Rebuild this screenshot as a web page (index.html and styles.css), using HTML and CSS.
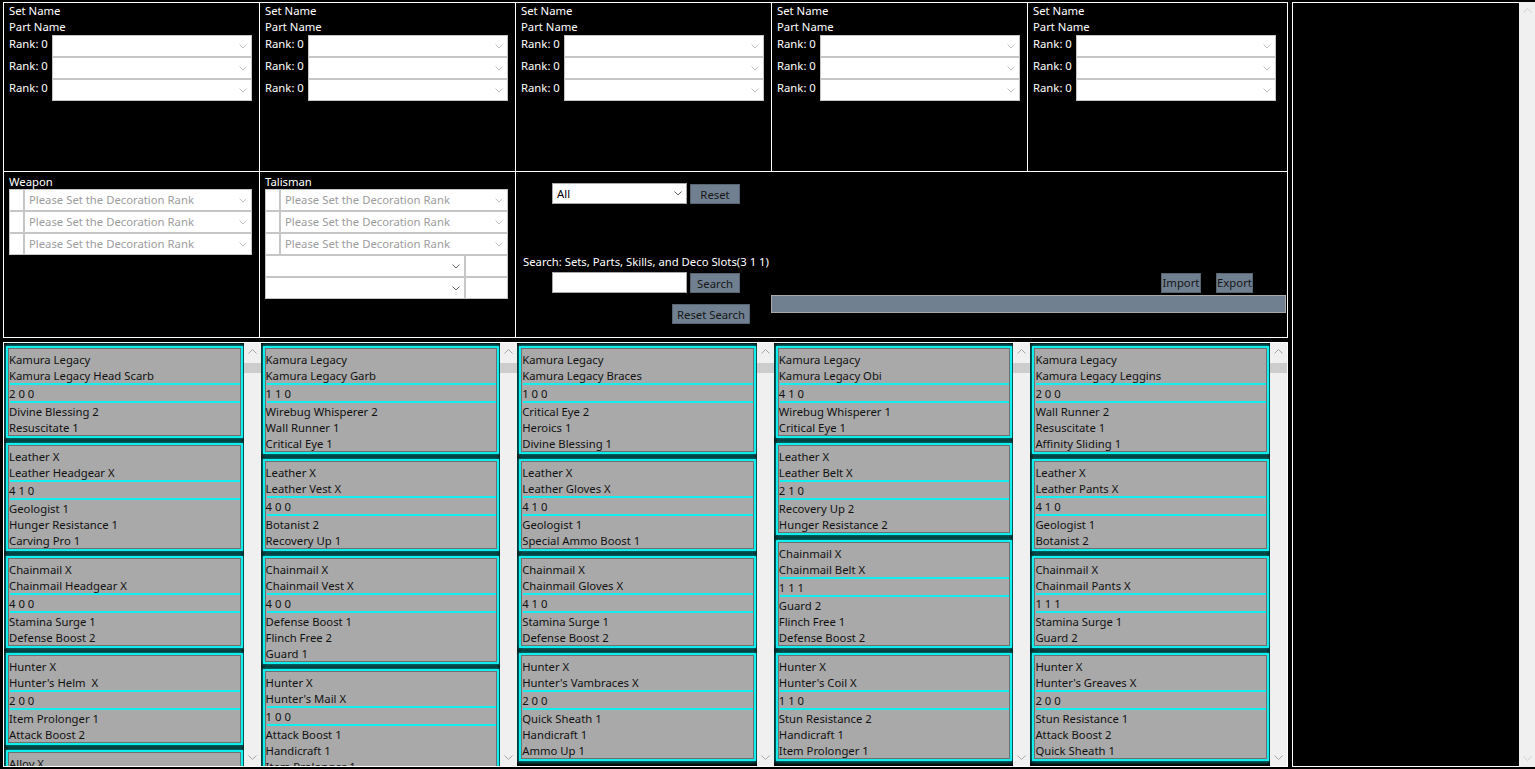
FILE: index.html
```html
<!DOCTYPE html>
<html>
<head>
<meta charset="utf-8">
<link rel="stylesheet" href="styles.css">
</head>
<body>
<div class="app">
  <div class="left">
    <div class="top-panel">
      <div class="cell set">
        <div class="t">Set Name</div><div class="t">Part Name</div>
        <div class="rank-row"><span class="rank">Rank: 0</span><div class="combo w200"><svg class="chev dis" width="8" height="5" viewBox="0 0 8 5"><path d="M0.5 0.5L4 4L7.5 0.5"/></svg></div></div>
        <div class="rank-row"><span class="rank">Rank: 0</span><div class="combo w200"><svg class="chev dis" width="8" height="5" viewBox="0 0 8 5"><path d="M0.5 0.5L4 4L7.5 0.5"/></svg></div></div>
        <div class="rank-row"><span class="rank">Rank: 0</span><div class="combo w200"><svg class="chev dis" width="8" height="5" viewBox="0 0 8 5"><path d="M0.5 0.5L4 4L7.5 0.5"/></svg></div></div>
      </div>
      <div class="cell set">
        <div class="t">Set Name</div><div class="t">Part Name</div>
        <div class="rank-row"><span class="rank">Rank: 0</span><div class="combo w200"><svg class="chev dis" width="8" height="5" viewBox="0 0 8 5"><path d="M0.5 0.5L4 4L7.5 0.5"/></svg></div></div>
        <div class="rank-row"><span class="rank">Rank: 0</span><div class="combo w200"><svg class="chev dis" width="8" height="5" viewBox="0 0 8 5"><path d="M0.5 0.5L4 4L7.5 0.5"/></svg></div></div>
        <div class="rank-row"><span class="rank">Rank: 0</span><div class="combo w200"><svg class="chev dis" width="8" height="5" viewBox="0 0 8 5"><path d="M0.5 0.5L4 4L7.5 0.5"/></svg></div></div>
      </div>
      <div class="cell set">
        <div class="t">Set Name</div><div class="t">Part Name</div>
        <div class="rank-row"><span class="rank">Rank: 0</span><div class="combo w200"><svg class="chev dis" width="8" height="5" viewBox="0 0 8 5"><path d="M0.5 0.5L4 4L7.5 0.5"/></svg></div></div>
        <div class="rank-row"><span class="rank">Rank: 0</span><div class="combo w200"><svg class="chev dis" width="8" height="5" viewBox="0 0 8 5"><path d="M0.5 0.5L4 4L7.5 0.5"/></svg></div></div>
        <div class="rank-row"><span class="rank">Rank: 0</span><div class="combo w200"><svg class="chev dis" width="8" height="5" viewBox="0 0 8 5"><path d="M0.5 0.5L4 4L7.5 0.5"/></svg></div></div>
      </div>
      <div class="cell set">
        <div class="t">Set Name</div><div class="t">Part Name</div>
        <div class="rank-row"><span class="rank">Rank: 0</span><div class="combo w200"><svg class="chev dis" width="8" height="5" viewBox="0 0 8 5"><path d="M0.5 0.5L4 4L7.5 0.5"/></svg></div></div>
        <div class="rank-row"><span class="rank">Rank: 0</span><div class="combo w200"><svg class="chev dis" width="8" height="5" viewBox="0 0 8 5"><path d="M0.5 0.5L4 4L7.5 0.5"/></svg></div></div>
        <div class="rank-row"><span class="rank">Rank: 0</span><div class="combo w200"><svg class="chev dis" width="8" height="5" viewBox="0 0 8 5"><path d="M0.5 0.5L4 4L7.5 0.5"/></svg></div></div>
      </div>
      <div class="cell set last">
        <div class="t">Set Name</div><div class="t">Part Name</div>
        <div class="rank-row"><span class="rank">Rank: 0</span><div class="combo w200"><svg class="chev dis" width="8" height="5" viewBox="0 0 8 5"><path d="M0.5 0.5L4 4L7.5 0.5"/></svg></div></div>
        <div class="rank-row"><span class="rank">Rank: 0</span><div class="combo w200"><svg class="chev dis" width="8" height="5" viewBox="0 0 8 5"><path d="M0.5 0.5L4 4L7.5 0.5"/></svg></div></div>
        <div class="rank-row"><span class="rank">Rank: 0</span><div class="combo w200"><svg class="chev dis" width="8" height="5" viewBox="0 0 8 5"><path d="M0.5 0.5L4 4L7.5 0.5"/></svg></div></div>
      </div>

      <div class="cell deco">
        <div class="t lbl">Weapon</div>
        <div class="deco-row"><div class="slot"></div><div class="combo w228 ph"><span>Please Set the Decoration Rank</span><svg class="chev dis" width="8" height="5" viewBox="0 0 8 5"><path d="M0.5 0.5L4 4L7.5 0.5"/></svg></div></div>
        <div class="deco-row"><div class="slot"></div><div class="combo w228 ph"><span>Please Set the Decoration Rank</span><svg class="chev dis" width="8" height="5" viewBox="0 0 8 5"><path d="M0.5 0.5L4 4L7.5 0.5"/></svg></div></div>
        <div class="deco-row"><div class="slot"></div><div class="combo w228 ph"><span>Please Set the Decoration Rank</span><svg class="chev dis" width="8" height="5" viewBox="0 0 8 5"><path d="M0.5 0.5L4 4L7.5 0.5"/></svg></div></div>
      </div>
      <div class="cell deco">
        <div class="t lbl">Talisman</div>
        <div class="deco-row"><div class="slot"></div><div class="combo w228 ph"><span>Please Set the Decoration Rank</span><svg class="chev dis" width="8" height="5" viewBox="0 0 8 5"><path d="M0.5 0.5L4 4L7.5 0.5"/></svg></div></div>
        <div class="deco-row"><div class="slot"></div><div class="combo w228 ph"><span>Please Set the Decoration Rank</span><svg class="chev dis" width="8" height="5" viewBox="0 0 8 5"><path d="M0.5 0.5L4 4L7.5 0.5"/></svg></div></div>
        <div class="deco-row"><div class="slot"></div><div class="combo w228 ph"><span>Please Set the Decoration Rank</span><svg class="chev dis" width="8" height="5" viewBox="0 0 8 5"><path d="M0.5 0.5L4 4L7.5 0.5"/></svg></div></div>
        <div class="deco-row"><div class="combo w200"><svg class="chev" width="8" height="5" viewBox="0 0 8 5"><path d="M0.5 0.5L4 4L7.5 0.5"/></svg></div><div class="tbox w43"></div></div>
        <div class="deco-row"><div class="combo w200"><svg class="chev" width="8" height="5" viewBox="0 0 8 5"><path d="M0.5 0.5L4 4L7.5 0.5"/></svg></div><div class="tbox w43"></div></div>
      </div>
      <div class="cell mid">
        <div class="mid-left">
          <div class="filter-row">
            <div class="combo w135 all"><span>All</span><svg class="chev" width="8" height="5" viewBox="0 0 8 5"><path d="M0.5 0.5L4 4L7.5 0.5"/></svg></div>
            <div class="btn b-reset">Reset</div>
          </div>
          <div class="search-label">Search: Sets, Parts, Skills, and Deco Slots(3 1 1)</div>
          <div class="search-row">
            <div class="tbox w135 h21"></div>
            <div class="btn b-search">Search</div>
          </div>
          <div class="btn b-reset-search">Reset Search</div>
        </div>
        <div class="mid-right">
          <div class="io-row">
            <div class="btn b-import">Import</div>
            <div class="btn b-export">Export</div>
          </div>
          <div class="bar"></div>
        </div>
      </div>
    </div>

    <div class="lists">
      <div class="list">
        <div class="cards">
          <div class="card"><div class="ci"><div class="ln">Kamura Legacy</div><div class="ln">Kamura Legacy Head Scarb</div><div class="sep"></div><div class="ln">2 0 0</div><div class="sep"></div><div class="ln">Divine Blessing 2</div><div class="ln">Resuscitate 1</div></div></div>
          <div class="card"><div class="ci"><div class="ln">Leather X</div><div class="ln">Leather Headgear X</div><div class="sep"></div><div class="ln">4 1 0</div><div class="sep"></div><div class="ln">Geologist 1</div><div class="ln">Hunger Resistance 1</div><div class="ln">Carving Pro 1</div></div></div>
          <div class="card"><div class="ci"><div class="ln">Chainmail X</div><div class="ln">Chainmail Headgear X</div><div class="sep"></div><div class="ln">4 0 0</div><div class="sep"></div><div class="ln">Stamina Surge 1</div><div class="ln">Defense Boost 2</div></div></div>
          <div class="card"><div class="ci"><div class="ln">Hunter X</div><div class="ln">Hunter's Helm  X</div><div class="sep"></div><div class="ln">2 0 0</div><div class="sep"></div><div class="ln">Item Prolonger 1</div><div class="ln">Attack Boost 2</div></div></div>
          <div class="card"><div class="ci"><div class="ln">Alloy X</div><div class="ln">Alloy Helm X</div><div class="sep"></div><div class="ln">1 0 0</div><div class="sep"></div><div class="ln">Attack Boost 1</div><div class="ln">Guard 1</div></div></div>
        </div>
        <div class="vscroll"><div class="sb-btn"><svg class="sb-chev" width="9" height="5" viewBox="0 0 9 5"><path d="M0.5 4.5L4.5 0.5L8.5 4.5"/></svg></div><div class="thumb"></div><div class="sb-fill"></div><div class="sb-btn"><svg class="sb-chev" width="9" height="5" viewBox="0 0 9 5"><path d="M0.5 0.5L4.5 4.5L8.5 0.5"/></svg></div></div>
      </div>
      <div class="list">
        <div class="cards">
          <div class="card"><div class="ci"><div class="ln">Kamura Legacy</div><div class="ln">Kamura Legacy Garb</div><div class="sep"></div><div class="ln">1 1 0</div><div class="sep"></div><div class="ln">Wirebug Whisperer 2</div><div class="ln">Wall Runner 1</div><div class="ln">Critical Eye 1</div></div></div>
          <div class="card"><div class="ci"><div class="ln">Leather X</div><div class="ln">Leather Vest X</div><div class="sep"></div><div class="ln">4 0 0</div><div class="sep"></div><div class="ln">Botanist 2</div><div class="ln">Recovery Up 1</div></div></div>
          <div class="card"><div class="ci"><div class="ln">Chainmail X</div><div class="ln">Chainmail Vest X</div><div class="sep"></div><div class="ln">4 0 0</div><div class="sep"></div><div class="ln">Defense Boost 1</div><div class="ln">Flinch Free 2</div><div class="ln">Guard 1</div></div></div>
          <div class="card"><div class="ci"><div class="ln">Hunter X</div><div class="ln">Hunter's Mail X</div><div class="sep"></div><div class="ln">1 0 0</div><div class="sep"></div><div class="ln">Attack Boost 1</div><div class="ln">Handicraft 1</div><div class="ln">Item Prolonger 1</div></div></div>
        </div>
        <div class="vscroll"><div class="sb-btn"><svg class="sb-chev" width="9" height="5" viewBox="0 0 9 5"><path d="M0.5 4.5L4.5 0.5L8.5 4.5"/></svg></div><div class="thumb"></div><div class="sb-fill"></div><div class="sb-btn"><svg class="sb-chev" width="9" height="5" viewBox="0 0 9 5"><path d="M0.5 0.5L4.5 4.5L8.5 0.5"/></svg></div></div>
      </div>
      <div class="list">
        <div class="cards">
          <div class="card"><div class="ci"><div class="ln">Kamura Legacy</div><div class="ln">Kamura Legacy Braces</div><div class="sep"></div><div class="ln">1 0 0</div><div class="sep"></div><div class="ln">Critical Eye 2</div><div class="ln">Heroics 1</div><div class="ln">Divine Blessing 1</div></div></div>
          <div class="card"><div class="ci"><div class="ln">Leather X</div><div class="ln">Leather Gloves X</div><div class="sep"></div><div class="ln">4 1 0</div><div class="sep"></div><div class="ln">Geologist 1</div><div class="ln">Special Ammo Boost 1</div></div></div>
          <div class="card"><div class="ci"><div class="ln">Chainmail X</div><div class="ln">Chainmail Gloves X</div><div class="sep"></div><div class="ln">4 1 0</div><div class="sep"></div><div class="ln">Stamina Surge 1</div><div class="ln">Defense Boost 2</div></div></div>
          <div class="card"><div class="ci"><div class="ln">Hunter X</div><div class="ln">Hunter's Vambraces X</div><div class="sep"></div><div class="ln">2 0 0</div><div class="sep"></div><div class="ln">Quick Sheath 1</div><div class="ln">Handicraft 1</div><div class="ln">Ammo Up 1</div></div></div>
        </div>
        <div class="vscroll"><div class="sb-btn"><svg class="sb-chev" width="9" height="5" viewBox="0 0 9 5"><path d="M0.5 4.5L4.5 0.5L8.5 4.5"/></svg></div><div class="thumb"></div><div class="sb-fill"></div><div class="sb-btn"><svg class="sb-chev" width="9" height="5" viewBox="0 0 9 5"><path d="M0.5 0.5L4.5 4.5L8.5 0.5"/></svg></div></div>
      </div>
      <div class="list">
        <div class="cards">
          <div class="card"><div class="ci"><div class="ln">Kamura Legacy</div><div class="ln">Kamura Legacy Obi</div><div class="sep"></div><div class="ln">4 1 0</div><div class="sep"></div><div class="ln">Wirebug Whisperer 1</div><div class="ln">Critical Eye 1</div></div></div>
          <div class="card"><div class="ci"><div class="ln">Leather X</div><div class="ln">Leather Belt X</div><div class="sep"></div><div class="ln">2 1 0</div><div class="sep"></div><div class="ln">Recovery Up 2</div><div class="ln">Hunger Resistance 2</div></div></div>
          <div class="card"><div class="ci"><div class="ln">Chainmail X</div><div class="ln">Chainmail Belt X</div><div class="sep"></div><div class="ln">1 1 1</div><div class="sep"></div><div class="ln">Guard 2</div><div class="ln">Flinch Free 1</div><div class="ln">Defense Boost 2</div></div></div>
          <div class="card"><div class="ci"><div class="ln">Hunter X</div><div class="ln">Hunter's Coil X</div><div class="sep"></div><div class="ln">1 1 0</div><div class="sep"></div><div class="ln">Stun Resistance 2</div><div class="ln">Handicraft 1</div><div class="ln">Item Prolonger 1</div></div></div>
        </div>
        <div class="vscroll"><div class="sb-btn"><svg class="sb-chev" width="9" height="5" viewBox="0 0 9 5"><path d="M0.5 4.5L4.5 0.5L8.5 4.5"/></svg></div><div class="thumb"></div><div class="sb-fill"></div><div class="sb-btn"><svg class="sb-chev" width="9" height="5" viewBox="0 0 9 5"><path d="M0.5 0.5L4.5 4.5L8.5 0.5"/></svg></div></div>
      </div>
      <div class="list">
        <div class="cards">
          <div class="card"><div class="ci"><div class="ln">Kamura Legacy</div><div class="ln">Kamura Legacy Leggins</div><div class="sep"></div><div class="ln">2 0 0</div><div class="sep"></div><div class="ln">Wall Runner 2</div><div class="ln">Resuscitate 1</div><div class="ln">Affinity Sliding 1</div></div></div>
          <div class="card"><div class="ci"><div class="ln">Leather X</div><div class="ln">Leather Pants X</div><div class="sep"></div><div class="ln">4 1 0</div><div class="sep"></div><div class="ln">Geologist 1</div><div class="ln">Botanist 2</div></div></div>
          <div class="card"><div class="ci"><div class="ln">Chainmail X</div><div class="ln">Chainmail Pants X</div><div class="sep"></div><div class="ln">1 1 1</div><div class="sep"></div><div class="ln">Stamina Surge 1</div><div class="ln">Guard 2</div></div></div>
          <div class="card"><div class="ci"><div class="ln">Hunter X</div><div class="ln">Hunter's Greaves X</div><div class="sep"></div><div class="ln">2 0 0</div><div class="sep"></div><div class="ln">Stun Resistance 1</div><div class="ln">Attack Boost 2</div><div class="ln">Quick Sheath 1</div></div></div>
        </div>
        <div class="vscroll"><div class="sb-btn"><svg class="sb-chev" width="9" height="5" viewBox="0 0 9 5"><path d="M0.5 4.5L4.5 0.5L8.5 4.5"/></svg></div><div class="thumb"></div><div class="sb-fill"></div><div class="sb-btn"><svg class="sb-chev" width="9" height="5" viewBox="0 0 9 5"><path d="M0.5 0.5L4.5 4.5L8.5 0.5"/></svg></div></div>
      </div>
    </div>
  </div>

  <div class="right">
    <div class="right-box"></div>
    <div class="vscroll tall"><div class="sb-btn"><svg class="sb-chev dis" width="9" height="5" viewBox="0 0 9 5"><path d="M0.5 4.5L4.5 0.5L8.5 4.5"/></svg></div><div class="sb-fill"></div><div class="sb-btn"><svg class="sb-chev dis" width="9" height="5" viewBox="0 0 9 5"><path d="M0.5 0.5L4.5 4.5L8.5 0.5"/></svg></div></div>
  </div>
</div>
</body>
</html>
```

FILE: styles.css
```css
html, body {
  margin: 0;
  padding: 0;
}
body {
  background: #000;
  color: #fff;
  font-family: "Noto Sans", "Open Sans", sans-serif;
  font-size: 11.3px;
  line-height: 16px;
  width: 1535px;
  height: 769px;
  overflow: hidden;
}
.app {
  display: flex;
  align-items: flex-start;
  padding: 2px 0 0 3px;
}
.left {
  width: 1285px;
  flex-shrink: 0;
  display: flex;
  flex-direction: column;
}

/* ---------- top panel ---------- */
.top-panel {
  height: 336px;
  box-sizing: border-box;
  border: 1px solid #fff;
  display: grid;
  grid-template-columns: 256px 256px 256px 256px 1fr;
  grid-template-rows: 169px 1fr;
}
.cell {
  box-sizing: border-box;
  border-right: 1px solid #fff;
  padding-left: 5px;
  min-width: 0;
}
.cell.set {
  border-bottom: 1px solid #fff;
}
.cell.last {
  border-right: none;
}
.cell.deco {
  padding-top: 1px;
}
.t {
  box-sizing: border-box;
  height: 16px;
  white-space: nowrap;
}
.t.lbl {
  padding-top: 1px;
}
.rank-row {
  display: flex;
  height: 22px;
}
.rank {
  box-sizing: border-box;
  width: 43px;
  padding-top: 1px;
  flex-shrink: 0;
  white-space: nowrap;
}
.combo {
  box-sizing: border-box;
  height: 22px;
  background: #fff;
  border: 1px solid #c6c6c6;
  display: flex;
  align-items: center;
  justify-content: flex-end;
  padding-right: 4px;
  flex-shrink: 0;
  color: #000;
}
.combo span {
  flex: 1;
  white-space: nowrap;
  overflow: hidden;
}
.w200 { width: 200px; }
.w228 { width: 228px; }
.w135 { width: 135px; }
.w43 { width: 43px; }
.chev path {
  fill: none;
  stroke: #606060;
  stroke-width: 1;
}
.chev.dis path {
  stroke: #c4c4c4;
}
.deco-row {
  display: flex;
  height: 22px;
}
.slot {
  box-sizing: border-box;
  width: 15px;
  height: 22px;
  background: #fff;
  border: 1px solid #c6c6c6;
  flex-shrink: 0;
}
.combo.ph {
  padding-left: 4px;
  color: #9c9c9c;
}
.tbox {
  box-sizing: border-box;
  height: 22px;
  background: #fff;
  border: 1px solid #c6c6c6;
  flex-shrink: 0;
}
.tbox.h21 { height: 21px; }

/* ---------- middle controls ---------- */
.cell.mid {
  grid-column: 3 / 6;
  border-right: none;
  padding-left: 0;
  display: flex;
}
.mid-left {
  width: 255px;
  flex-shrink: 0;
  display: flex;
  flex-direction: column;
  align-items: flex-start;
}
.filter-row {
  display: flex;
  align-items: flex-start;
  margin: 11px 0 0 36px;
}
.combo.all {
  height: 21px;
  padding-left: 4px;
  border-color: #a8a8a8;
}
.btn {
  box-sizing: border-box;
  height: 20px;
  background: #708090;
  border: 1px solid #58646f;
  color: #161616;
  display: flex;
  align-items: center;
  justify-content: center;
  padding-top: 1px;
  white-space: nowrap;
  flex-shrink: 0;
}
.b-reset {
  width: 50px;
  margin: 1px 0 0 3px;
}
.search-label {
  box-sizing: border-box;
  margin-top: 49px;
  padding: 1px 0 0 7px;
  height: 16px;
  white-space: nowrap;
}
.search-row {
  display: flex;
  align-items: flex-start;
  margin: 3px 0 0 36px;
}
.search-row .tbox {
  border-color: #a8a8a8;
}
.b-search {
  width: 50px;
  margin: 1px 0 0 3px;
}
.b-reset-search {
  width: 78px;
  margin: 11px 0 0 156px;
}
.mid-right {
  flex: 1;
  display: flex;
  flex-direction: column;
  padding-top: 101px;
}
.io-row {
  display: flex;
  gap: 15px;
  padding-left: 390px;
}
.b-import { width: 40px; padding-top: 0; }
.b-export { width: 37px; padding-top: 0; }
.bar {
  box-sizing: border-box;
  height: 18px;
  margin: 2px 1px 0 0;
  background: #708090;
  border: 1px solid #a9a9a9;
}

/* ---------- lists ---------- */
.lists {
  margin-top: 4px;
  height: 425px;
  box-sizing: border-box;
  border: 1px solid #fff;
  display: grid;
  grid-template-columns: repeat(5, 1fr);
  overflow: hidden;
}
.list {
  display: flex;
  min-width: 0;
  height: 423px;
  overflow: hidden;
}
.cards {
  flex: 1;
  min-width: 0;
  padding: 3px 1px 0 2px;
  display: flex;
  flex-direction: column;
  gap: 5px;
  overflow: hidden;
}
.card {
  flex-shrink: 0;
  border: 2px solid #12eded;
  background: #a9a9a9;
  color: #111;
  box-shadow: 0 0 4px 1px rgba(0, 175, 175, 0.85);
}
.ci {
  border: 1px solid #6f6f6f;
  padding-top: 2px;
}
.ln {
  box-sizing: border-box;
  height: 16px;
  padding-top: 1px;
  white-space: pre;
}
.sep {
  height: 2px;
  margin-left: 1px;
  background: #12eded;
}
.vscroll {
  width: 17px;
  flex-shrink: 0;
  background: #f0f0f0;
  display: flex;
  flex-direction: column;
}
.sb-btn {
  height: 17px;
  display: flex;
  align-items: center;
  justify-content: center;
}
.sb-chev path {
  fill: none;
  stroke: #a6a6a6;
  stroke-width: 1;
}
.sb-chev.dis path {
  stroke: #cfcfcf;
}
.thumb {
  height: 10px;
  margin-top: 3px;
  background: #cdcdcd;
}
.sb-fill {
  flex: 1;
}

/* ---------- right panel ---------- */
.right {
  margin-left: 4px;
  width: 244px;
  height: 765px;
  flex-shrink: 0;
  display: flex;
}
.right-box {
  flex: 1;
  box-sizing: border-box;
  border: 1px solid #fff;
  border-right: none;
}
```
